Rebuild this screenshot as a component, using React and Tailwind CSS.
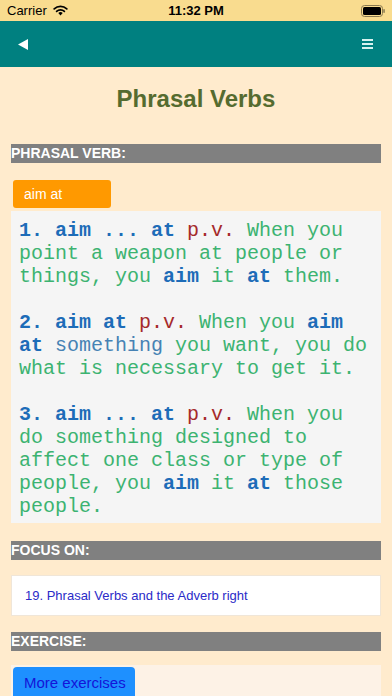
import React from 'react';

const sans = { fontFamily: '"Liberation Sans", Arial, sans-serif' };
const mono = { fontFamily: '"Courier New", "Liberation Mono", monospace' };

// Section header bar
const SectionBar = ({ title, className = '' }) => (
  <div className={`h-[19px] bg-[#808080] text-white font-bold text-[14px] leading-[19px] ${className}`}>
    {title}
  </div>
);

const B = ({ children }) => <span className="font-bold text-[#1d6cb8]">{children}</span>;
const PV = () => <span className="text-[#a52a2a]">p.v.</span>;
const G = ({ children }) => <span className="text-[#3cb371]">{children}</span>;
const Line = ({ children }) => <div className="h-[23px] whitespace-pre">{children}</div>;

const StatusBar = () => (
  <div className="h-[21px] bg-[#f9dc8f] flex items-center justify-between px-[7px] text-[13px] text-black">
    <div className="flex items-center gap-[6px] w-[120px]">
      <span>Carrier</span>
      <svg width="15" height="11" viewBox="0 0 15 11">
        <path d="M7.5 10.5 L5.3 8.1 A3.2 3.2 0 0 1 9.7 8.1 Z" fill="black" />
        <path d="M3.6 6.4 A5.6 5.6 0 0 1 11.4 6.4" stroke="black" strokeWidth="1.7" fill="none" strokeLinecap="round" />
        <path d="M1.2 3.9 A9 9 0 0 1 13.8 3.9" stroke="black" strokeWidth="1.7" fill="none" strokeLinecap="round" />
      </svg>
    </div>
    <span className="font-semibold">11:32 PM</span>
    <div className="w-[120px] flex justify-end">
      <svg width="24" height="12" viewBox="0 0 24 12">
        <rect x="0.5" y="0.5" width="21" height="11" rx="3" fill="none" stroke="#8a7a50" />
        <rect x="2" y="2" width="18" height="8" rx="1.5" fill="black" />
        <rect x="22.3" y="4" width="1.5" height="4" rx="0.7" fill="#8a7a50" />
      </svg>
    </div>
  </div>
);

const NavBar = () => (
  <div className="h-[46px] bg-[#008080] flex items-center justify-between pl-[18px] pr-[19px]">
    <svg width="10" height="11" viewBox="0 0 10 11">
      <path d="M0 5.5 L10 0 L10 11 Z" fill="white" />
    </svg>
    <div className="flex flex-col gap-[2px] w-[11px]">
      <div className="h-[2px] bg-[#d6f2ef]" />
      <div className="h-[2px] bg-[#d6f2ef]" />
      <div className="h-[2px] bg-[#d6f2ef]" />
    </div>
  </div>
);

export default function App() {
  return (
    <div className="w-[392px] h-[696px] overflow-hidden bg-[#ffebcd]" style={sans}>
      <StatusBar />
      <NavBar />

      <div className="px-[11px]">
        <h1 className="mt-[18px] h-[28px] leading-[28px] text-center text-[24px] font-bold text-[#556b2f]">
          Phrasal Verbs
        </h1>

        <SectionBar title="PHRASAL VERB:" className="mt-[31px]" />

        <div className="mt-[17px] ml-[2px] w-[98px] h-[28px] rounded-[3px] bg-[#ff9900] text-white text-[14px] leading-[28px] pl-[11px]">
          aim at
        </div>

        {/* Definitions */}
        <div className="mt-[3px] bg-[#f5f5f5] px-[8px] pt-[8px] pb-[5px] text-[20px] leading-[23px]" style={mono}>
          <Line><B>1. aim ... at</B> <PV /> <G>When you</G></Line>
          <Line><G>point a weapon at people or</G></Line>
          <Line><G>things, you </G><B>aim</B><G> it </G><B>at</B><G> them.</G></Line>
          <Line> </Line>
          <Line><B>2. aim at</B> <PV /> <G>When you </G><B>aim</B></Line>
          <Line><B>at</B><span className="text-[#4682b4]"> something</span><G> you want, you do</G></Line>
          <Line><G>what is necessary to get it.</G></Line>
          <Line> </Line>
          <Line><B>3. aim ... at</B> <PV /> <G>When you</G></Line>
          <Line><G>do something designed to</G></Line>
          <Line><G>affect one class or type of</G></Line>
          <Line><G>people, you </G><B>aim</B><G> it </G><B>at</B><G> those</G></Line>
          <Line><G>people.</G></Line>
        </div>

        <SectionBar title="FOCUS ON:" className="mt-[18px]" />

        <div className="mt-[15px] h-[41px] bg-white border border-[#f0e6d8] flex items-center pl-[13px] text-[13px] text-[#2b2bc8]">
          19. Phrasal Verbs and the Adverb right
        </div>

        <SectionBar title="EXERCISE:" className="mt-[16px]" />

        <div className="mt-[14px] bg-[#fdf2e6] p-[2px] h-[40px]">
          <div className="w-[122px] h-[32px] rounded-[4px] bg-[#1e90ff] text-[#1414d8] text-[15px] leading-[32px] pl-[11px]">
            More exercises
          </div>
        </div>
      </div>
    </div>
  );
}
